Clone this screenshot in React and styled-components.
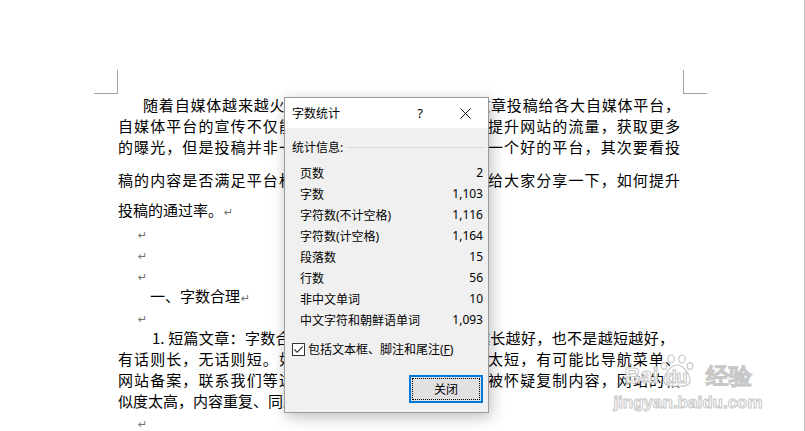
import React from 'react';
import styled, { createGlobalStyle } from 'styled-components';

const Global = createGlobalStyle`
  html, body { margin: 0; padding: 0; background: #fff; }
  body { overflow: hidden; }
`;

const Screen = styled.div`
  position: relative;
  width: 805px;
  height: 431px;
  box-sizing: border-box;
  border-right: 1px solid #c2c2c2;
  background: #fff;
  overflow: hidden;
`;

const Page = styled.div`
  padding: 94px 0 0 118px;
  width: 562px;
  font-family: "Noto Sans CJK SC", sans-serif;
  font-size: 15px;
  color: #000;
`;

const Line = styled.div`
  height: 21px;
  line-height: 21px;
  overflow: hidden;
  margin-top: ${p => p.$gap || 0}px;
  padding-left: ${p => p.$indent || 0}px;
  padding-right: ${p => p.$right || 0}px;
  text-align: ${p => (p.$justify ? 'justify' : 'left')};
  text-align-last: ${p => (p.$justify ? 'justify' : 'auto')};
  text-justify: inter-character;
`;

const Mark = styled.span`
  font-family: "DejaVu Sans", sans-serif;
  font-size: 11px;
  color: #707070;
  margin-left: 1px;
`;

const CropMark = styled.div`
  position: absolute;
  top: 70px;
  width: 24px;
  height: 24px;
  box-sizing: border-box;
  border-bottom: 1px solid #a3a3a3;
  ${p => (p.$side === 'left'
    ? 'left: 94px; border-right: 1px solid #a3a3a3;'
    : 'left: 683px; border-left: 1px solid #a3a3a3;')}
`;

const Dialog = styled.div`
  position: absolute;
  left: 284px;
  top: 97px;
  width: 205px;
  height: 316px;
  box-sizing: border-box;
  border: 1px solid #9a9a9a;
  background: #f0f0f0;
  box-shadow: 2px 4px 14px rgba(0, 0, 0, 0.26);
  display: flex;
  flex-direction: column;
  font-family: "Noto Sans", "Noto Sans CJK SC", sans-serif;
  font-size: 12px;
  color: #000;
`;

const TitleBar = styled.div`
  height: 30px;
  background: #fff;
  display: flex;
  align-items: center;
  padding-left: 7px;
`;

const Title = styled.div`
  flex: 1;
`;

const TitleButton = styled.div`
  width: ${p => p.$w}px;
  height: 30px;
  display: flex;
  align-items: center;
  justify-content: center;
  font-size: 13px;
`;

const Body = styled.div`
  flex: 1;
  display: flex;
  flex-direction: column;
  padding: 11px 5px 9px 7px;
`;

const GroupHeader = styled.div`
  height: 16px;
  display: flex;
  align-items: center;
`;

const Rule = styled.div`
  flex: 1;
  height: 1px;
  background: #d9d9d9;
  margin-left: 4px;
  margin-right: -1px;
`;

const StatList = styled.div`
  margin-top: 7px;
  padding-left: 8px;
`;

const StatRow = styled.div`
  height: 21px;
  display: flex;
  align-items: center;
  justify-content: space-between;
`;

const CheckRow = styled.div`
  margin-top: 11px;
  height: 16px;
  display: flex;
  align-items: center;
  gap: 3px;
  white-space: nowrap;
`;

const CheckBox = styled.div`
  flex: none;
  width: 13px;
  height: 13px;
  box-sizing: border-box;
  border: 1px solid #333;
  background: #fff;
  display: flex;
  align-items: center;
  justify-content: center;
`;

const Accel = styled.span`
  text-decoration: underline;
`;

const ButtonRow = styled.div`
  margin-top: 18px;
  display: flex;
  justify-content: flex-end;
`;

const CloseButton = styled.div`
  position: relative;
  width: 74px;
  height: 28px;
  box-sizing: border-box;
  border: 2px solid #0078d7;
  background: #e1e1e1;
  display: flex;
  align-items: center;
  justify-content: center;
  &::after {
    content: "";
    position: absolute;
    inset: 1px;
    border: 1px dotted #000;
  }
`;

const Watermark = styled.div`
  position: absolute;
  left: 612px;
  top: 354px;
  width: 152px;
  display: flex;
  flex-direction: column;
  align-items: center;
  pointer-events: none;
`;

const Brand = styled.div`
  display: flex;
  align-items: flex-end;
  height: 34px;
`;

const BrandText = styled.span`
  font-family: "Liberation Sans", sans-serif;
  font-weight: 700;
  font-size: ${p => p.$size || 22}px;
  line-height: 24px;
  color: rgba(255, 255, 255, 0.82);
  -webkit-text-stroke: 1px #c8c8c8;
  margin-left: ${p => p.$ml || 0}px;
`;

const PawBadge = styled.div`
  position: relative;
  width: 34px;
  height: 34px;
  display: flex;
  align-items: flex-end;
  justify-content: center;
  margin-left: 1px;
  & > svg {
    position: absolute;
    left: 0;
    top: 0;
  }
`;

const DuText = styled.span`
  position: relative;
  font-family: "Liberation Sans", sans-serif;
  font-weight: 700;
  font-size: 18px;
  line-height: 22px;
  color: rgba(255, 255, 255, 0.82);
  -webkit-text-stroke: 1px #c8c8c8;
`;

const Url = styled.span`
  font-family: "Liberation Sans", sans-serif;
  font-weight: 700;
  font-size: 17px;
  line-height: 20px;
  margin-top: 5px;
  color: rgba(255, 255, 255, 0.82);
  -webkit-text-stroke: 1px #c8c8c8;
`;

const PawIcon = () => (
  <svg width="34" height="34" viewBox="0 0 34 34">
    <g fill="rgba(255,255,255,0.82)" stroke="#c8c8c8" strokeWidth="1.2">
      <ellipse cx="11" cy="5" rx="3.2" ry="4" />
      <ellipse cx="22" cy="5" rx="3.2" ry="4" />
      <ellipse cx="4" cy="12" rx="2.8" ry="3.4" />
      <ellipse cx="30" cy="12" rx="2.8" ry="3.4" />
      <path d="M17 11 C11 11 5 19 4 25 C3 31 9 33 17 32 C25 33 31 31 30 25 C29 19 23 11 17 11 Z" />
    </g>
  </svg>
);

const stats = [
  ['页数', '2'],
  ['字数', '1,103'],
  ['字符数(不计空格)', '1,116'],
  ['字符数(计空格)', '1,164'],
  ['段落数', '15'],
  ['行数', '56'],
  ['非中文单词', '10'],
  ['中文字符和朝鲜语单词', '1,093'],
];

const M = () => <Mark>↵</Mark>;

export default function App() {
  return (
    <Screen>
      <Global />
      <CropMark $side="left" />
      <CropMark $side="right" />
      <Page>
        <Line $indent={25} $justify>随着自媒体越来越火爆，很多人都愿意把自己的文章投稿给各大自媒体平台，</Line>
        <Line $justify>自媒体平台的宣传不仅能够给网站带来外链，同时能提升网站的流量，获取更多</Line>
        <Line $justify>的曝光，但是投稿并非一件简单的事情，首先要找到一个好的平台，其次要看投</Line>
        <Line $justify $gap={12}>稿的内容是否满足平台标准的要求，接下来小编就来给大家分享一下，如何提升</Line>
        <Line $gap={9}>投稿的通过率。<M /></Line>
        <Line $gap={2} $indent={19}><M /></Line>
        <Line $indent={19}><M /></Line>
        <Line $indent={19}><M /></Line>
        <Line $indent={32}>一、字数合理<M /></Line>
        <Line $indent={19}><M /></Line>
        <Line $indent={34} $right={6} $justify>1. 短篇文章：字数合理，并不是文章的字数写得越长越好，也不是越短越好，</Line>
        <Line $justify>有话则长，无话则短。如果我们发布的一篇文章正文太短，有可能比导航菜单、</Line>
        <Line $justify>网站备案，联系我们等这些固定模板内容还少，就会被怀疑复制内容，网站的相</Line>
        <Line>似度太高，内容重复、同质化严重。<M /></Line>
        <Line $indent={19}><M /></Line>
      </Page>

      <Watermark>
        <Brand>
          <BrandText>Bai</BrandText>
          <PawBadge>
            <PawIcon />
            <DuText>du</DuText>
          </PawBadge>
          <BrandText $ml={12} $size={23}>经验</BrandText>
        </Brand>
        <Url>jingyan.baidu.com</Url>
      </Watermark>

      <Dialog>
        <TitleBar>
          <Title>字数统计</Title>
          <TitleButton $w={44}>?</TitleButton>
          <TitleButton $w={46}>
            <svg width="11" height="11" viewBox="0 0 11 11">
              <path d="M0.5 0.5 L10.5 10.5 M10.5 0.5 L0.5 10.5" stroke="#111" strokeWidth="1" fill="none" />
            </svg>
          </TitleButton>
        </TitleBar>
        <Body>
          <GroupHeader>
            统计信息:
            <Rule />
          </GroupHeader>
          <StatList>
            {stats.map(([label, value]) => (
              <StatRow key={label}>
                <span>{label}</span>
                <span>{value}</span>
              </StatRow>
            ))}
          </StatList>
          <CheckRow>
            <CheckBox>
              <svg width="11" height="11" viewBox="0 0 11 11">
                <path d="M1.5 5.5 L4.2 8.3 L9.6 2.6" stroke="#222" strokeWidth="1.1" fill="none" />
              </svg>
            </CheckBox>
            <span>包括文本框、脚注和尾注(<Accel>F</Accel>)</span>
          </CheckRow>
          <ButtonRow>
            <CloseButton>关闭</CloseButton>
          </ButtonRow>
        </Body>
      </Dialog>
    </Screen>
  );
}
